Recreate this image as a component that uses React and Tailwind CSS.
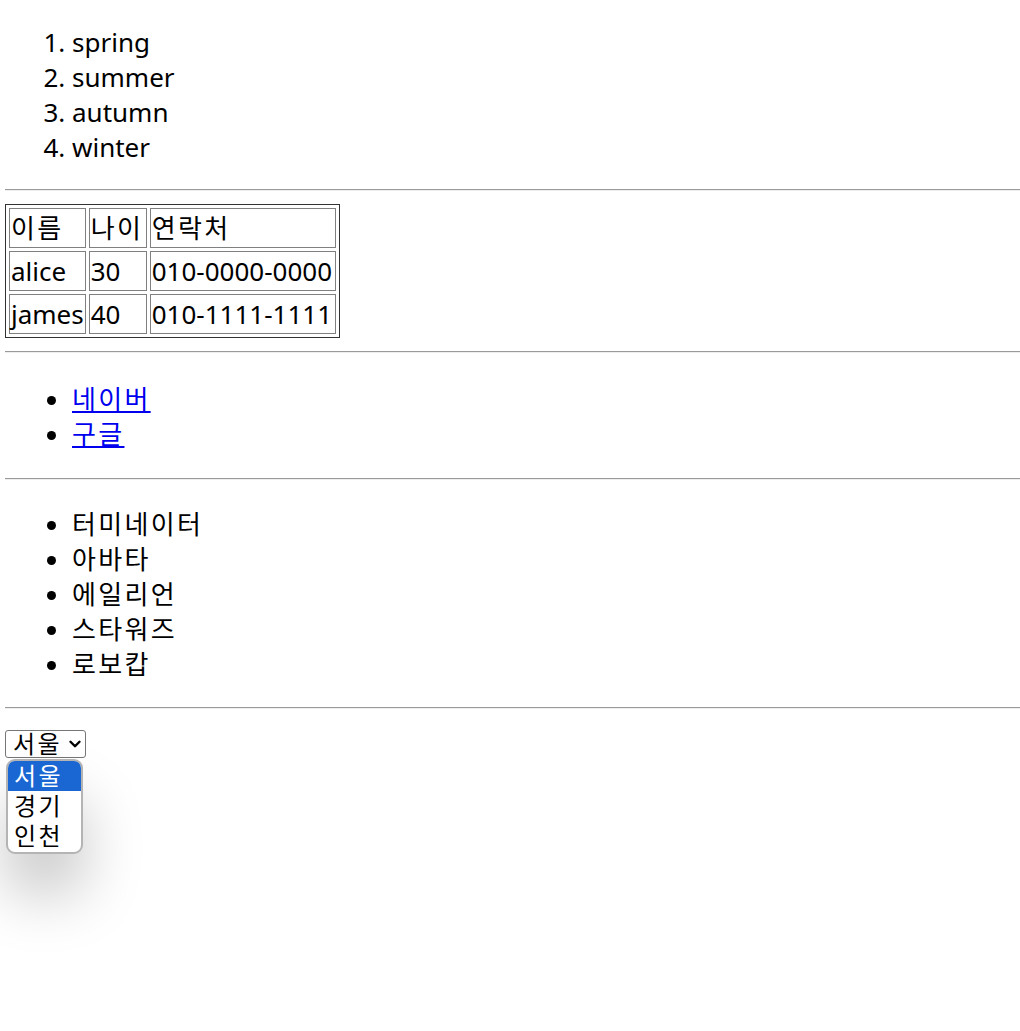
import React from "react";
import { ChevronDown } from "lucide-react";

const seasons = ["spring", "summer", "autumn", "winter"];
const movies = ["터미네이터", "아바타", "에일리언", "스타워즈", "로보캅"];
const people = [
  { name: "alice", age: 30, phone: "010-0000-0000" },
  { name: "james", age: 40, phone: "010-1111-1111" },
];

function Rule({ className = "" }) {
  return <div className={`h-[2px] border-t border-t-[#9a9a9a] border-b border-b-[#eeeeee] ${className}`} />;
}

// hangul in Noto CJK runs a little narrower than the original font
function Ko({ children }) {
  return <span className="whitespace-nowrap tracking-[2.3px]">{children}</span>;
}

export default function App() {
  const cell = "h-[40px] whitespace-nowrap border border-[#808080] px-[1px] py-0 leading-[35px] text-left align-middle font-normal";
  return (
    <div
      className="relative min-h-[1031px] bg-white pl-[5px] text-[26px] text-black"
      style={{ fontFamily: '"Noto Sans", "Noto Sans CJK KR", sans-serif' }}
    >
      <ol className="list-decimal pl-[67px] pt-[25px] leading-[35px]">
        {seasons.map((s) => (
          <li key={s}>{s}</li>
        ))}
      </ol>

      <Rule className="mt-[24px]" />

      <table className="mt-[13px] border-separate border-spacing-[3px] border border-[#333333]">
        <thead>
          <tr>
            <th className={`${cell} w-[75px]`}><Ko>이름</Ko></th>
            <th className={`${cell} w-[58px]`}><Ko>나이</Ko></th>
            <th className={`${cell} w-[186px]`}><Ko>연락처</Ko></th>
          </tr>
        </thead>
        <tbody>
          {people.map((p) => (
            <tr key={p.name}>
              <td className={cell}>{p.name}</td>
              <td className={cell}>{p.age}</td>
              <td className={cell}>{p.phone}</td>
            </tr>
          ))}
        </tbody>
      </table>

      <Rule className="mt-[13px]" />

      <ul className="list-disc pl-[67px] pt-[29px] leading-[35px]">
        <li>
          <a href="#" className="text-[#0000ee] underline"><Ko>네이버</Ko></a>
        </li>
        <li>
          <a href="#" className="text-[#0000ee] underline"><Ko>구글</Ko></a>
        </li>
      </ul>

      <Rule className="mt-[26px]" />

      <ul className="list-disc pl-[67px] pt-[27px] leading-[35px]">
        {movies.map((m) => (
          <li key={m}><Ko>{m}</Ko></li>
        ))}
      </ul>

      <Rule className="mt-[25px]" />

      <div className="mt-[21px] flex">
        <div className="flex h-[28px] w-[81px] items-center gap-[4px] whitespace-nowrap rounded-[3px] border border-[#767676] pl-[7px] text-[24px] leading-none">
          <Ko>서울</Ko>
          <ChevronDown className="shrink-0" size={18} strokeWidth={3.2} />
        </div>
      </div>

      <div className="absolute left-[6px] top-[759px] w-[77px] overflow-hidden rounded-[9px] border-2 border-[#b4b4b4] bg-white text-[24px] shadow-[0_40px_60px_rgba(0,0,0,0.22)]">
        <div className="h-[30px] bg-[#1a66d2] pl-[6px] leading-[30px] text-white"><Ko>서울</Ko></div>
        <div className="h-[30px] pl-[6px] leading-[30px]"><Ko>경기</Ko></div>
        <div className="h-[31px] pl-[6px] leading-[30px]"><Ko>인천</Ko></div>
      </div>
    </div>
  );
}
